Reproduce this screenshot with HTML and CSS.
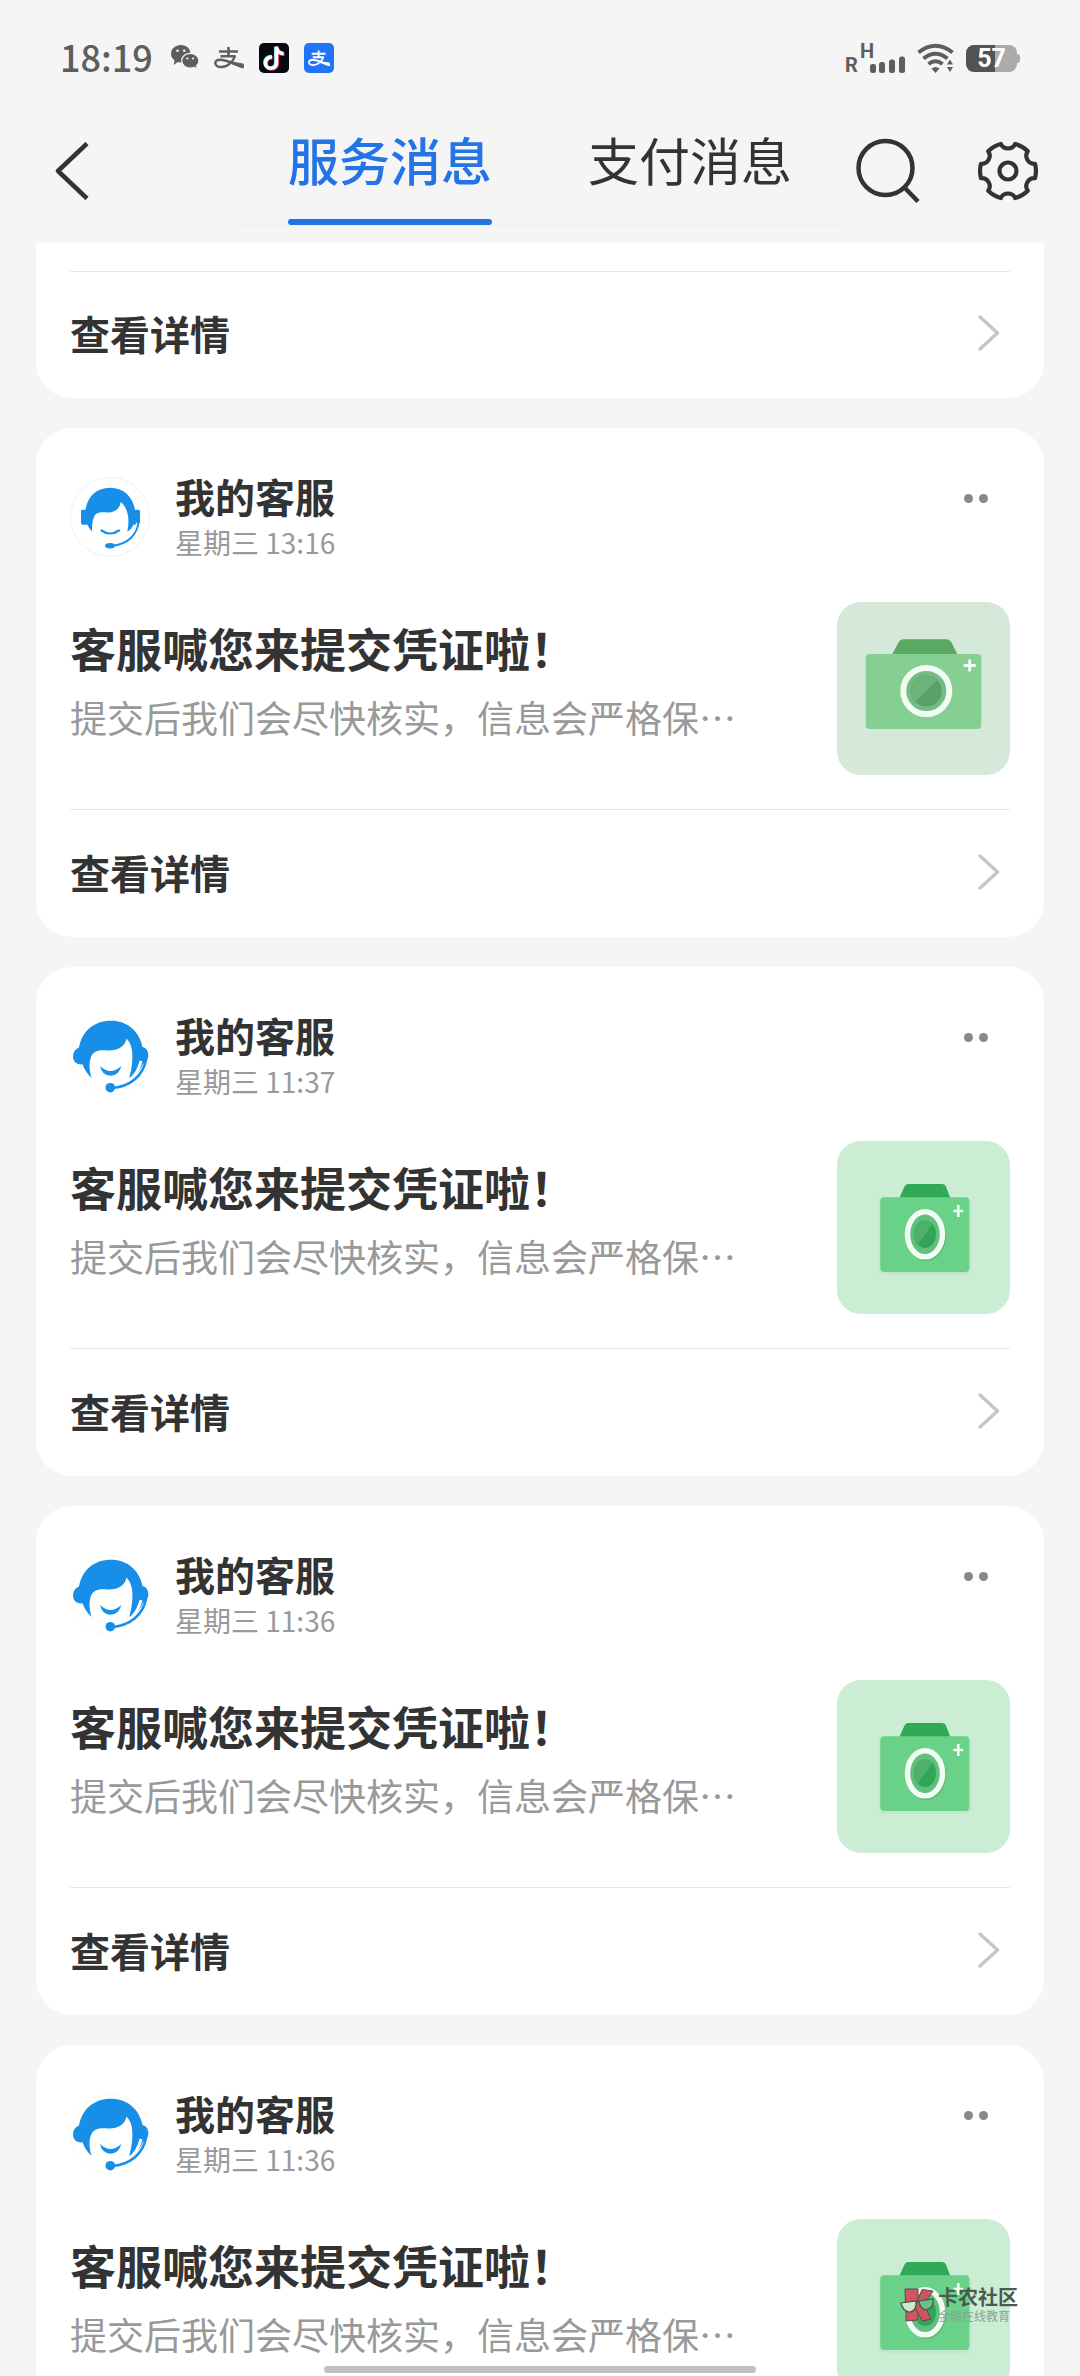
FILE: index.html
```html
<!DOCTYPE html>
<html lang="zh-CN">
<head>
    <meta charset="UTF-8">
    <meta name="viewport" content="width=device-width, initial-scale=1.0">
    <title>服务消息</title>
    <link rel="stylesheet" href="styles.css">
</head>
<body>
    <!-- Shared icons -->
    <svg class="sprite" aria-hidden="true">
        <symbol id="alipay" viewBox="0 0 30 22">
            <g fill="none" stroke="currentColor" stroke-width="2.6">
                <path d="M5 4.5H24M14.5 0V9M6.500 9.200H21.500"/>
                <path d="M21 9C19.500 14 14 20 7.500 20C3.500 20 1.300 18.500 1.300 16.300C1.300 14 3.500 12.700 6.500 12.700C12 12.700 18 16.500 29.500 20" stroke-width="2.400"/>
            </g>
            <path d="M17 14.300C21 15 25 16 29.800 16.800V21.500C25 20.500 20.500 18.300 16 16.300Z" fill="currentColor"/>
        </symbol>
        <symbol id="chevron" viewBox="0 0 22 36">
            <path d="M2 2L19.500 18L2 34" fill="none" stroke="#c6c6c6" stroke-width="3.400" stroke-linecap="round" stroke-linejoin="round"/>
        </symbol>
        <symbol id="agent-small" viewBox="0 0 80 80">
            <circle cx="40" cy="40" r="39.500" fill="#fff" stroke="#eef0f2"/>
            <path d="M22 54.500C19 51 18 49 17.500 47.700H13C11.500 47.700 11 47 11 45.700V34.700C11 33.300 11.500 32.700 13 32.700H15.500C17.500 19 27 10.700 40 10.700C53 10.700 62.500 19 65 32.700H68C69.500 32.700 70 33.300 70 34.700V45.700C70 47 69.500 47.700 68 47.700H63.500C62 50.500 60.500 53 57.300 54.700C59 46 60 33 50.700 25C50 32 44 36 37 35.500C31 35 26 35 24 40C22 44 22 50 22 54.500Z" fill="#178fe8"/>
            <path d="M68.500 46C67 58 58 67.500 43 69" fill="none" stroke="#fff" stroke-width="5"/>
            <path d="M68.500 45C67 58 58 67 43 68.700" fill="none" stroke="#178fe8" stroke-width="2"/>
            <ellipse cx="40" cy="68.700" rx="5" ry="2.800" fill="#178fe8"/>
            <path d="M31.500 53.500Q40 59.500 49 53.500" fill="none" stroke="#178fe8" stroke-width="2.200" stroke-linecap="round"/>
        </symbol>
        <symbol id="agent" viewBox="0 0 80 80">
            <circle cx="40" cy="40" r="39.500" fill="#fff" stroke="#fbf8f4"/>
            <path d="M21.700 62C17 58 14 53 12.500 48.300C6 49 3 45 3 40.500C3 36 5 33 9 31.500C12 15 24 4.700 41 4.700C57 4.700 69.500 15 72.500 31C77 32 78.500 36 78.300 40C78 44 75.500 47 73 48C70 55 65 60 59.300 62C62 52 66 32 56.500 22.500C55 31 47 35 38 34.500C30 34 24 34 21 41C18.500 47 19.500 56 21.700 62Z" fill="#178fe8"/>
            <path d="M71 45C68 57 60 67 47 70" fill="none" stroke="#fff" stroke-width="3"/>
            <path d="M76 44C73 59 61 71 41 72" fill="none" stroke="#178fe8" stroke-width="2.600"/>
            <circle cx="40.300" cy="71.700" r="4.800" fill="#178fe8"/>
            <path d="M30 50Q40.500 60 51.300 50Q49 59.500 40.500 59.700Q32 59.500 30 50Z" fill="#178fe8"/>
        </symbol>
        <symbol id="camera-wide" viewBox="0 0 173 173">
            <rect width="173" height="173" fill="#d5e9da"/>
            <path d="M55 52.500L61.500 40.500Q63.300 37.300 67 37.300H109Q112.500 37.300 114.500 40.500L120.500 52.500Z" fill="#5aa862"/>
            <rect x="28.700" y="52" width="115.600" height="75" rx="4" fill="#86cf92"/>
            <circle cx="89.300" cy="89" r="23" fill="#74bb84" stroke="#f2fdf2" stroke-width="6"/>
            <circle cx="89.300" cy="89" r="15.500" fill="#57a367"/>
            <path d="M78.300 100A15.500 15.500 0 0 1 100.300 78Z" fill="#6cb27a"/>
            <path d="M132.700 57.500V69.500M126.700 63.500H138.700" stroke="#f2fdf2" stroke-width="2.800"/>
        </symbol>
        <symbol id="camera" viewBox="0 0 173 173">
            <rect width="173" height="173" fill="#caedd4"/>
            <rect x="41" y="56" width="94" height="78" rx="7" fill="#c1e7cc"/>
            <path d="M62.300 57L67.500 45.500Q68.500 43 71 43H105.500Q108 43 109 45.500L113.300 57Z" fill="#31aa57"/>
            <rect x="43.300" y="56.300" width="89" height="74.700" rx="4" fill="#69d188"/>
            <ellipse cx="89" cy="94.500" rx="20" ry="25.500" fill="#56b873"/>
            <ellipse cx="88" cy="93.300" rx="17.500" ry="22.500" fill="#60bf7c" stroke="#f2fdf4" stroke-width="5.500"/>
            <ellipse cx="88" cy="93.300" rx="11" ry="13.700" fill="#31a456"/>
            <path d="M80.500 103.500A11 13.700 0 0 1 95.500 83.300Z" fill="#4db16c"/>
            <path d="M121.300 64V76M116.300 70H126.300" stroke="#f2fdf4" stroke-width="2.600"/>
        </symbol>
    </svg>

    <div class="status-bar">
        <div class="status-left">
            <span class="time">18:19</span>
            <svg width="28" height="26" viewBox="0 0 28 26">
                <path d="M10 0C4.500 0 0 3.800 0 8.700C0 11.500 1.500 13.800 3.500 15.400L2.700 20L6.800 17C8 17.300 9 17.400 10.300 17.400C15.500 17.400 19.500 13.500 19.500 8.700C19.500 3.800 15.500 0 10 0Z" fill="#5e5e5e"/>
                <path d="M19 8.300C14.500 8.300 10.700 11.500 10.700 15.700C10.700 20 14.500 23.200 19 23.200C20.500 23.200 22 23 23.300 22.300L26.300 24.700L25.600 20.800C27 19.500 28 17.700 28 15.700C28 11.500 24 8.300 19 8.300Z" fill="#5e5e5e" stroke="#f5f5f5" stroke-width="1.200"/>
                <circle cx="6.500" cy="5.700" r="1.300" fill="#f5f5f5"/>
                <circle cx="13.200" cy="5.700" r="1.300" fill="#f5f5f5"/>
                <circle cx="16.300" cy="13.500" r="1.100" fill="#f5f5f5"/>
                <circle cx="22" cy="13.500" r="1.100" fill="#f5f5f5"/>
            </svg>
            <svg width="30" height="22"><use href="#alipay"/></svg>
            <svg width="30" height="30" viewBox="0 0 30 30">
                <rect width="30" height="30" rx="5" fill="#060a12"/>
                <g fill="none" stroke-width="3.600">
                    <path d="M12.300 13.500C8.500 13.300 5.800 16 5.800 19.500C5.800 23 8.500 25 11.300 25C14.500 25 16.700 22.500 16.700 19.500V4" stroke="#3ce6e4"/>
                    <path d="M13.700 14.700C10 14.500 7.200 17 7.200 20.500C7.200 24 10 26 12.700 26C16 26 18.300 23.700 18.300 20.700V5.200C18.800 9 21.500 11.300 25.500 11.500" stroke="#f0305c"/>
                    <path d="M13 14C9.200 13.900 6.500 16.300 6.500 19.900C6.500 23.400 9.300 25.300 12 25.300C15.300 25.300 17.400 23 17.400 20V3.500C17.900 8 20.700 10.500 24.600 10.500" stroke="#fff"/>
                </g>
            </svg>
            <span class="app-badge"><svg width="22" height="19"><use href="#alipay"/></svg></span>
        </div>
        <div class="status-right">
            <div class="signal">
                <span>R</span>
                <span class="network">H</span>
                <svg width="36" height="17" viewBox="0 0 36 17" fill="#5e5e5e">
                    <rect x="0" y="8" width="6" height="9" rx="2.500"/>
                    <rect x="9" y="6" width="6" height="11" rx="2.500"/>
                    <rect x="19" y="3.500" width="6" height="13.500" rx="2.500"/>
                    <rect x="29" y="0.500" width="6" height="16.500" rx="2.500"/>
                </svg>
            </div>
            <svg width="38" height="30" viewBox="0 0 38 30">
                <g fill="none" stroke="#5e5e5e" stroke-width="4">
                    <path d="M1.500 9.500Q18.500 -4 35.500 9.500"/>
                    <path d="M6.500 15.500Q18.500 6 30.500 15.500"/>
                    <path d="M11.500 21Q18.500 15.500 25.500 21"/>
                </g>
                <path d="M14.500 25.500Q18.500 22.500 22.500 25.500L18.500 30Z" fill="#5e5e5e"/>
                <path d="M33 14L38 22L33 30L28 22Z" fill="#f5f5f5"/>
                <path d="M33 16.500L36 21.500H30ZM33 29L36 24H30Z" fill="#5e5e5e"/>
            </svg>
            <span class="battery">57</span>
        </div>
    </div>

    <header class="nav">
        <button class="back" type="button" aria-label="返回">
            <svg width="34" height="58" viewBox="0 0 34 58">
                <path d="M32 1.500L3 29L32 56.500" fill="none" stroke="#333" stroke-width="4.500" stroke-linejoin="round"/>
            </svg>
        </button>
        <div class="tabs" role="tablist">
            <button class="tab active" type="button" role="tab" aria-selected="true">服务消息</button>
            <button class="tab" type="button" role="tab" aria-selected="false">支付消息</button>
        </div>
        <div class="actions">
            <button type="button" aria-label="搜索">
                <svg width="64" height="66" viewBox="0 0 64 66" fill="none" stroke="#333" stroke-width="4.500">
                    <circle cx="29.500" cy="30" r="27"/>
                    <path d="M48 49L62 63.500"/>
                </svg>
            </button>
            <button type="button" aria-label="设置">
                <svg width="60" height="60" viewBox="0 0 60 60" fill="none" stroke="#333" stroke-width="4.200" stroke-linejoin="round">
                    <path d="M22.800 3A8 8 0 0 0 37.200 3A28 28 0 0 1 49.800 10.200A8 8 0 0 0 57 22.800A28 28 0 0 1 57 37.200A8 8 0 0 0 49.800 49.800A28 28 0 0 1 37.200 57A8 8 0 0 0 22.800 57A28 28 0 0 1 10.200 49.800A8 8 0 0 0 3 37.200A28 28 0 0 1 3 22.800A8 8 0 0 0 10.200 10.200A28 28 0 0 1 22.800 3Z"/>
                    <circle cx="30" cy="30" r="8.500"/>
                </svg>
            </button>
        </div>
    </header>

    <main class="list">
        <article class="card scrolled">
            <a class="detail" href="#">查看详情<svg width="22" height="36"><use href="#chevron"/></svg></a>
        </article>

        <article class="card">
            <div class="sender">
                <svg width="80" height="80"><use href="#agent-small"/></svg>
                <div class="sender-info">
                    <h2>我的客服</h2>
                    <time>星期三 13:16</time>
                </div>
                <button class="more" type="button" aria-label="更多"><i></i><i></i></button>
            </div>
            <div class="content">
                <div class="message">
                    <h3>客服喊您来提交凭证啦！</h3>
                    <p>提交后我们会尽快核实，信息会严格保…</p>
                </div>
                <svg class="thumb"><use href="#camera-wide"/></svg>
            </div>
            <a class="detail" href="#">查看详情<svg width="22" height="36"><use href="#chevron"/></svg></a>
        </article>

        <article class="card">
            <div class="sender">
                <svg width="80" height="80"><use href="#agent"/></svg>
                <div class="sender-info">
                    <h2>我的客服</h2>
                    <time>星期三 11:37</time>
                </div>
                <button class="more" type="button" aria-label="更多"><i></i><i></i></button>
            </div>
            <div class="content">
                <div class="message">
                    <h3>客服喊您来提交凭证啦！</h3>
                    <p>提交后我们会尽快核实，信息会严格保…</p>
                </div>
                <svg class="thumb"><use href="#camera"/></svg>
            </div>
            <a class="detail" href="#">查看详情<svg width="22" height="36"><use href="#chevron"/></svg></a>
        </article>

        <article class="card">
            <div class="sender">
                <svg width="80" height="80"><use href="#agent"/></svg>
                <div class="sender-info">
                    <h2>我的客服</h2>
                    <time>星期三 11:36</time>
                </div>
                <button class="more" type="button" aria-label="更多"><i></i><i></i></button>
            </div>
            <div class="content">
                <div class="message">
                    <h3>客服喊您来提交凭证啦！</h3>
                    <p>提交后我们会尽快核实，信息会严格保…</p>
                </div>
                <svg class="thumb"><use href="#camera"/></svg>
            </div>
            <a class="detail" href="#">查看详情<svg width="22" height="36"><use href="#chevron"/></svg></a>
        </article>

        <article class="card">
            <div class="sender">
                <svg width="80" height="80"><use href="#agent"/></svg>
                <div class="sender-info">
                    <h2>我的客服</h2>
                    <time>星期三 11:36</time>
                </div>
                <button class="more" type="button" aria-label="更多"><i></i><i></i></button>
            </div>
            <div class="content">
                <div class="message">
                    <h3>客服喊您来提交凭证啦！</h3>
                    <p>提交后我们会尽快核实，信息会严格保…</p>
                </div>
                <svg class="thumb"><use href="#camera"/></svg>
            </div>
        </article>
    </main>

    <div class="watermark">
        <svg width="36" height="34" viewBox="0 0 36 34">
            <g fill="#cf5560" stroke="#5c4a48" stroke-width="1">
                <path d="M5 1H18V32L6 33Z"/>
                <path d="M22 1.500L33 3L24 16L31 31L22 33L15 19Z"/>
            </g>
            <g fill="#c4ead0" stroke="#3f5a49" stroke-width="1.200">
                <path d="M1 15L16 13Q17 23 10 24Q3 24 1 15Z"/>
                <path d="M19 13L33 11Q34 20 27 21.500Q20 22 19 13Z" fill="#6cc186"/>
                <path d="M16 14L19 13"/>
            </g>
        </svg>
        <div>
            <strong>卡农社区</strong>
            <span>金融在线教育</span>
        </div>
    </div>
    <div class="home-indicator"></div>
</body>
</html>
```
FILE: styles.css
```css
* {
    margin: 0;
    padding: 0;
    box-sizing: border-box;
}

body {
    position: relative;
    display: flex;
    flex-direction: column;
    height: 100vh;
    overflow: hidden;
    font-family: "Noto Sans CJK SC", "Noto Sans", sans-serif;
    background: #f5f5f5;
    color: #333;
}

button {
    border: none;
    background: none;
    font: inherit;
    color: inherit;
    cursor: pointer;
}

svg {
    display: block;
    flex-shrink: 0;
}

.sprite {
    position: absolute;
    width: 0;
    height: 0;
}

/* Status bar */
.status-bar {
    display: flex;
    flex-shrink: 0;
    align-items: center;
    justify-content: space-between;
    height: 116px;
    padding: 0 60px;
    color: #5e5e5e;
}

.status-left {
    display: flex;
    align-items: center;
    gap: 15px;
}

.time {
    margin-right: 3px;
    padding-bottom: 4px;
    font-size: 36px;
    font-weight: 500;
    line-height: 40px;
}

.app-badge {
    display: flex;
    align-items: center;
    justify-content: center;
    width: 30px;
    height: 30px;
    border-radius: 5px;
    background: #1f75f5;
    color: #fff;
}

.status-right {
    display: flex;
    align-items: center;
    gap: 11px;
}

.signal {
    display: flex;
    align-items: flex-end;
    height: 30px;
    font-family: Roboto, sans-serif;
    font-size: 20px;
    font-weight: 700;
    line-height: 16px;
}

.signal .network {
    align-self: flex-start;
    margin: 0 -4px 0 2px;
}

.battery {
    position: relative;
    width: 51px;
    height: 27px;
    margin-right: 3px;
    border-radius: 8px;
    background: linear-gradient(90deg, #535353 56%, #ababab 56%);
    color: #fff;
    font-family: Roboto, sans-serif;
    font-size: 25px;
    font-weight: 700;
    line-height: 28px;
    text-align: center;
}

.battery::after {
    content: "";
    position: absolute;
    top: 9px;
    right: -3px;
    width: 3px;
    height: 9px;
    border-radius: 0 3px 3px 0;
    background: #ababab;
}

/* Navigation */
.nav {
    display: grid;
    grid-template-columns: 240px 1fr 240px;
    flex-shrink: 0;
    height: 110px;
    margin-bottom: 17px;
}

.back {
    display: flex;
    align-items: center;
    padding-left: 55px;
}

.tabs {
    display: flex;
    border-bottom: 1px solid #eee;
}

.tab {
    position: relative;
    flex: 1;
    padding-bottom: 24px;
    font-size: 51px;
    line-height: 60px;
}

.tab.active {
    color: #2474e5;
    font-weight: 500;
}

.tab.active::after {
    content: "";
    position: absolute;
    bottom: 0;
    left: 50%;
    width: 204px;
    height: 6px;
    margin-left: -102px;
    border-radius: 3px;
    background: #2474e5;
}

.actions {
    display: flex;
    align-items: center;
    justify-content: space-between;
    padding: 0 42px 0 16px;
}

/* Message cards */
.list {
    display: flex;
    flex-direction: column;
    gap: 30px;
    flex: 1;
    min-height: 0;
    padding: 0 36px;
    overflow: hidden;
}

.card {
    flex-shrink: 0;
    padding: 43px 34px 0;
    border-radius: 36px;
    background: #fff;
}

.card.scrolled {
    padding-top: 28px;
    border-radius: 0 0 36px 36px;
}

.sender {
    display: flex;
    align-items: center;
    margin-bottom: 39px;
}

.sender-info {
    flex: 1;
    margin-left: 25px;
}

.sender-info h2 {
    font-size: 40px;
    font-weight: 700;
    line-height: 50px;
}

.sender-info time {
    display: block;
    color: #999;
    font-size: 28px;
    line-height: 42px;
}

.more {
    display: flex;
    align-items: center;
    align-self: flex-start;
    justify-content: center;
    gap: 6px;
    width: 68px;
    height: 54px;
}

.more i {
    width: 9px;
    height: 9px;
    border-radius: 50%;
    background: #888;
}

.content {
    display: flex;
    justify-content: space-between;
    margin-bottom: 34px;
}

.message {
    padding-top: 15px;
}

.message h3 {
    margin-bottom: 15px;
    font-size: 46px;
    font-weight: 700;
    line-height: 60px;
}

.message p {
    color: #999;
    font-size: 37px;
    line-height: 50px;
}

.thumb {
    width: 173px;
    height: 173px;
    border-radius: 24px;
}

.detail {
    display: flex;
    align-items: center;
    justify-content: space-between;
    height: 127px;
    padding: 0 10px 4px 0;
    border-top: 1px solid #e8e8e8;
    color: #333;
    font-size: 40px;
    font-weight: 700;
    text-decoration: none;
}

.card:not(.scrolled) .detail {
    height: 128px;
}

/* Overlays */
.watermark {
    position: absolute;
    right: 62px;
    bottom: 52px;
    display: flex;
    align-items: center;
    gap: 2px;
    color: #4a5a50;
}

.watermark strong {
    display: block;
    font-size: 20px;
    line-height: 22px;
}

.watermark span {
    display: block;
    color: #8aa393;
    font-size: 12px;
    line-height: 16px;
}

.home-indicator {
    position: absolute;
    bottom: 3px;
    left: 30%;
    width: 40%;
    height: 7px;
    border-radius: 4px;
    background: #c1c1c1;
}
```
